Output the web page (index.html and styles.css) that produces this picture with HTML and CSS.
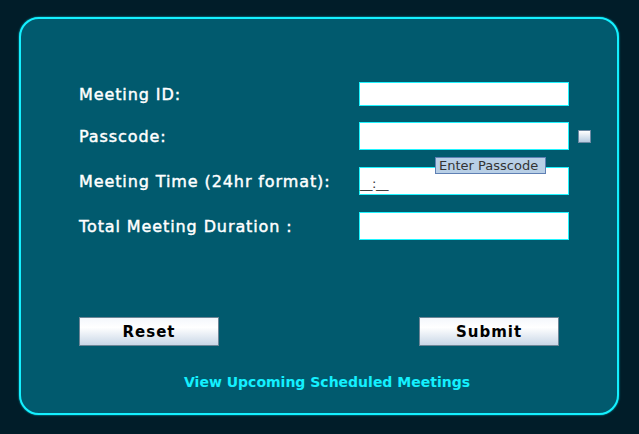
FILE: index.html
```html
<!DOCTYPE html>
<html>
<head>
<meta charset="utf-8">
<link rel="stylesheet" href="styles.css">
</head>
<body>
<div class="panel">
  <div class="form">
    <div class="row r1">
      <div class="label">Meeting ID:</div>
      <div class="field"></div>
    </div>
    <div class="row">
      <div class="label">Passcode:</div>
      <div class="field"></div>
      <div class="check"></div>
    </div>
    <div class="row">
      <div class="label">Meeting Time (24hr format):</div>
      <div class="field"><span class="mask">__:__</span></div>
    </div>
    <div class="row">
      <div class="label">Total Meeting Duration :</div>
      <div class="field"></div>
    </div>
  </div>
  <div class="buttons">
    <div class="btn">Reset</div>
    <div class="btn">Submit</div>
  </div>
  <div class="link">View Upcoming Scheduled Meetings</div>
  <div class="tooltip">Enter Passcode</div>
</div>
</body>
</html>
```
FILE: styles.css
```css
html, body {
  margin: 0;
  padding: 0;
  background: #011d29;
  width: 639px;
  height: 434px;
  overflow: hidden;
}
body {
  padding: 17px 0 0 19px;
  box-sizing: border-box;
  font-family: "DejaVu Sans", sans-serif;
}
.panel {
  position: relative;
  width: 600px;
  height: 398px;
  box-sizing: border-box;
  border: 2px solid #14f0ff;
  border-radius: 20px;
  background: #015a6e;
  box-shadow: 0 0 2px #0bd0e0;
  padding: 63px 0 0 58px;
}
.form {
  display: flex;
  flex-direction: column;
  gap: 16px;
}
.row {
  display: flex;
  align-items: center;
  height: 28px;
}
.row.r1 {
  height: 24px;
}
.row + .row + .row {
  margin-top: 1px;
}
.label {
  width: 280px;
  color: #ffffff;
  font-size: 16px;
  font-weight: normal;
  letter-spacing: 0.9px;
  -webkit-text-stroke: 0.45px #ffffff;
}
.field {
  width: 210px;
  height: 100%;
  box-sizing: border-box;
  background: #ffffff;
  border: 1px solid #1ff4ff;
  display: flex;
  align-items: center;
}
.mask {
  font-size: 13px;
  color: #333333;
  padding-top: 4px;
  letter-spacing: -0.5px;
}
.check {
  width: 13px;
  height: 13px;
  box-sizing: border-box;
  margin-left: 9px;
  border: 1px solid #6e8aa4;
  background: linear-gradient(#ffffff, #b8cce1);
}
.buttons {
  display: flex;
  justify-content: space-between;
  width: 480px;
  margin-top: 77px;
}
.btn {
  width: 140px;
  height: 29px;
  box-sizing: border-box;
  border: 1px solid #6d8596;
  background: linear-gradient(#f4f7fc 0%, #ffffff 35%, #c9d7e7 100%);
  display: flex;
  align-items: center;
  justify-content: center;
  font-size: 15px;
  font-weight: bold;
  letter-spacing: 1px;
  color: #000000;
}
.link {
  margin-top: 28px;
  margin-left: 105px;
  color: #14f0ff;
  font-size: 14px;
  font-weight: bold;
  letter-spacing: 0;
}
.tooltip {
  position: absolute;
  left: 414px;
  top: 138px;
  width: 111px;
  height: 17px;
  box-sizing: border-box;
  background: #b8cfe6;
  border: 1px solid #5f80b4;
  color: #333333;
  font-size: 13px;
  line-height: 15px;
  padding-left: 3px;
}
```
